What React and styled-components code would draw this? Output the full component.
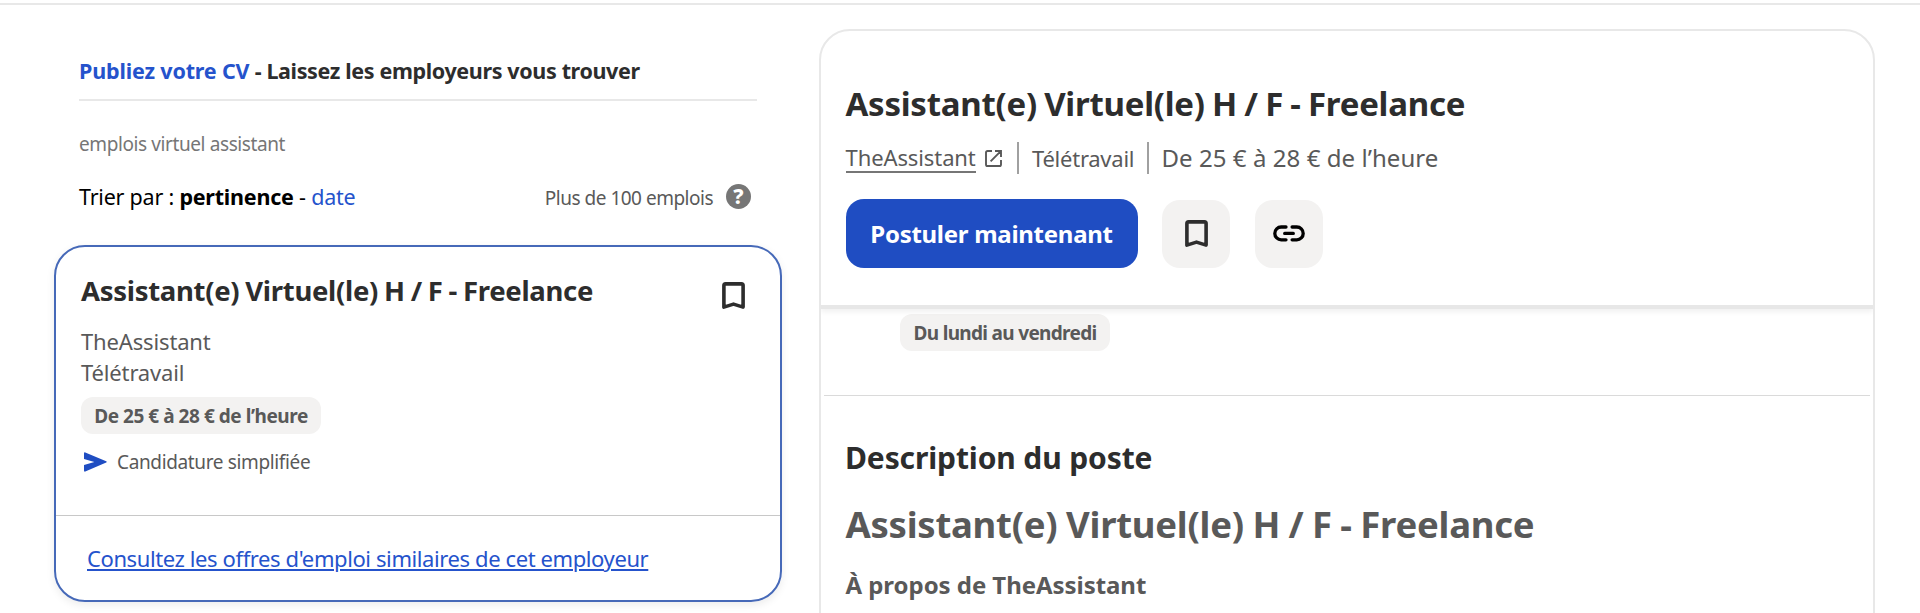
/* eslint-disable react/prop-types */
import React from "react"
import styled, { createGlobalStyle, css, ThemeProvider } from "styled-components"

const theme = {
  primary: "#1f4dc2",
  link: "#2553cc",
  cardBorder: "#4669b8",
  background: "#ffffff",
  surface: "#f3f2f1",
  divider: "#e8e8e8",
  textPrimary: "#2d2d2d",
  textSecondary: "#595959",
  textTertiary: "#767676",
}

const GlobalStyle = createGlobalStyle`
  * {
    box-sizing: border-box;
  }
  body {
    margin: 0;
    background-color: #ffffff;
    font-family: "Noto Sans", sans-serif;
    overflow: hidden;
  }
  h1, h2, h3, p {
    margin: 0;
  }
`

const Page = styled.div`
  height: 613px;
  padding-top: 3px;
  overflow: hidden;
  background-color: ${(props) => props.theme.background};
`

const Main = styled.main`
  display: flex;
  align-items: flex-start;
  gap: 37px;
  padding-left: 54px;
  border-top: 2px solid ${(props) => props.theme.divider};
`

const TextLink = styled.a`
  color: ${(props) => props.theme.link};
  text-decoration: none;
`

// Results column
// =============================================================================
const Results = styled.section`
  width: 728px;
  padding-top: 51px;
`

const ResultsHeader = styled.header`
  margin: 0 25px;
`

const PostResume = styled.p`
  padding-bottom: 13px;
  border-bottom: 2px solid ${(props) => props.theme.divider};
  color: ${(props) => props.theme.textPrimary};
  font-size: 21.5px;
  font-weight: 700;
  line-height: 30px;
  letter-spacing: -0.36px;
  white-space: nowrap;

  ${TextLink} {
    letter-spacing: -0.16px;
  }
`

const SearchTerms = styled.p`
  margin-top: 29px;
  color: ${(props) => props.theme.textTertiary};
  font-size: 19px;
  line-height: 28px;
  letter-spacing: -0.4px;
`

const SortRow = styled.div`
  display: flex;
  align-items: center;
  height: 30px;
  margin-top: 24px;
  padding-right: 6px;
`

const SortBy = styled.span`
  flex: 1;
  color: #000000;
  font-size: 21.5px;
  line-height: 30px;
  letter-spacing: -0.22px;
`

const JobCount = styled.span`
  padding-top: 1px;
  color: ${(props) => props.theme.textSecondary};
  font-size: 19px;
  line-height: 30px;
  letter-spacing: -0.5px;
`

const HelpBadge = styled.span`
  width: 25px;
  height: 25px;
  margin: 0 0 1px 13px;
  border-radius: 50%;
  background-color: ${(props) => props.theme.textTertiary};
  color: #ffffff;
  font-size: 21px;
  font-weight: 800;
  line-height: 25px;
  text-align: center;
`

const Card = styled.article`
  margin-top: 33px;
  border: 2px solid ${(props) => props.theme.cardBorder};
  border-radius: 31px;
  box-shadow: 0 3px 8px rgba(0, 0, 0, 0.08);
`

const CardBody = styled.div`
  padding: 26px 35px 39px 25px;
`

const CardTop = styled.div`
  display: flex;
  justify-content: space-between;
`

const CardTitle = styled.h2`
  color: ${(props) => props.theme.textPrimary};
  font-size: 27.5px;
  line-height: 36px;
  letter-spacing: -0.3px;
  word-spacing: -0.9px;
`

const CardBookmark = styled.span`
  display: flex;
  padding-top: 9px;
`

const CardDetails = styled.div`
  margin: 17px 0 9px;
  color: ${(props) => props.theme.textSecondary};
  font-size: 22px;
  line-height: 31px;
  letter-spacing: -0.15px;
`

const Pill = styled.span`
  display: flex;
  align-items: center;
  justify-content: center;
  width: ${(props) => props.$width};
  height: 37px;
  border-radius: 12px;
  background-color: ${(props) => props.theme.surface};
  color: ${(props) => props.theme.textSecondary};
  font-size: 19px;
  font-weight: 700;
  letter-spacing: ${(props) => props.$tracking};
  white-space: nowrap;
`

const EasyApply = styled.div`
  display: flex;
  align-items: center;
  gap: 10px;
  margin-top: 14px;
  padding-left: 3px;
  color: ${(props) => props.theme.textSecondary};
  font-size: 19px;
  line-height: 28px;
  letter-spacing: -0.36px;
`

const CardFooter = styled.footer`
  padding: 27px 31px;
  border-top: 1px solid #c8c8c8;
  font-size: 22px;
  line-height: 30px;
  letter-spacing: -0.4px;
  white-space: nowrap;

  ${TextLink} {
    text-decoration: underline;
    text-decoration-thickness: 2px;
    text-underline-offset: 2px;
  }
`

// Job panel
// =============================================================================
const Panel = styled.section`
  width: 1056px;
  height: 640px;
  margin-top: 24px;
  border: 2px solid ${(props) => props.theme.divider};
  border-radius: 31px 31px 0 0;
`

const PanelHeader = styled.header`
  padding: 51px 25px 37px 24.5px;
  border-bottom: 4px solid #e7e7e7;
  box-shadow: 0 3px 5px rgba(0, 0, 0, 0.06);
  clip-path: inset(0 0 -10px 0);
`

const PanelTitle = styled.h1`
  color: ${(props) => props.theme.textPrimary};
  font-size: 33px;
  line-height: 44px;
  letter-spacing: -0.25px;
  word-spacing: -1px;
`

const MetaRow = styled.div`
  display: flex;
  align-items: center;
  height: 32px;
  margin-top: 16px;
  color: ${(props) => props.theme.textSecondary};
  white-space: nowrap;
`

const Company = styled.a`
  width: 130px;
  margin-right: 9px;
  border-bottom: 2px solid #767676;
  font-size: 22px;
  line-height: 28px;
  letter-spacing: -0.1px;
`

const Location = styled.span`
  width: 100px;
  font-size: 22px;
  line-height: 32px;
  letter-spacing: -0.25px;
`

const Salary = styled.span`
  font-size: 24px;
  line-height: 32px;
  letter-spacing: 0.06px;
`

const Separator = styled.span`
  width: 2px;
  height: 32px;
  margin: 0 ${(props) => props.$after} 0 ${(props) => props.$before};
  background-color: #a0a0a0;
`

const Actions = styled.div`
  display: flex;
  align-items: center;
  margin-top: 25px;
`

const buttonBase = css`
  display: flex;
  align-items: center;
  justify-content: center;
  padding: 0;
  border: 0;
  border-radius: 18px;
  cursor: pointer;
`

const ApplyButton = styled.button`
  ${buttonBase}
  width: 292px;
  height: 69px;
  background-color: ${(props) => props.theme.primary};
  color: #ffffff;
  font-family: inherit;
  font-size: 24px;
  font-weight: 700;
  letter-spacing: -0.28px;
`

const IconButton = styled.button`
  ${buttonBase}
  width: 68px;
  height: 68px;
  margin-left: ${(props) => props.$gap};
  background-color: ${(props) => props.theme.surface};
`

const Schedule = styled.div`
  padding: 5px 79px 44px;
`

const Rule = styled.hr`
  height: 1px;
  margin: 0 3px;
  border: 0;
  background-color: #dadada;
`

const Description = styled.div`
  padding: 42px 25px 0 24.5px;
  color: ${(props) => props.theme.textSecondary};
`

const SectionTitle = styled.h2`
  color: ${(props) => props.theme.textPrimary};
  font-size: 30px;
  line-height: 40px;
  letter-spacing: -0.12px;
  text-indent: -0.5px;
`

const DescriptionTitle = styled.h1`
  margin-top: 21px;
  font-size: 36.5px;
  line-height: 50px;
  letter-spacing: -0.25px;
  word-spacing: -0.7px;
`

const DescriptionSubtitle = styled.h3`
  margin-top: 20px;
  font-size: 24px;
  line-height: 32px;
  letter-spacing: -0.05px;
`

// Icons
// =============================================================================
const BookmarkIcon = () => (
  <svg width="23" height="27" viewBox="0 0 23 27" fill="none">
    <path
      d="M1.9 3.6Q1.9 1.9 3.6 1.9H19.4Q21.1 1.9 21.1 3.6V25.1L11.5 22.1L1.9 25.1Z"
      stroke="#2d2d2d"
      strokeWidth="3.6"
      strokeLinejoin="round"
    />
  </svg>
)

const LinkIcon = () => (
  <svg width="32" height="17" viewBox="0 0 32 17" fill="none">
    <path
      d="M13 2H8.2a6.4 6.4 0 0 0 0 12.8H13M19.1 2h4.7a6.4 6.4 0 0 1 0 12.8h-4.7M11.7 8.4h8.6"
      stroke="#000000"
      strokeWidth="3.3"
      strokeLinecap="round"
    />
  </svg>
)

const SendIcon = () => (
  <svg width="23" height="20" viewBox="0 0 23 20">
    <path
      d="M0 1.4Q0 0 1.3.4L22.2 9.3Q23.2 9.9 22.2 10.5L1.3 19.6Q0 20 0 18.6V13.1L10.4 10L0 7Z"
      fill={theme.primary}
    />
  </svg>
)

const ExternalIcon = () => (
  <svg width="17" height="17" viewBox="0 0 17 17" fill="none">
    <path
      d="M7 1H2.6Q1 1 1 2.6V14.4Q1 16 2.6 16H14.4Q16 16 16 14.4V10M10 1H16V7M15.8 1.2L5.6 11.4"
      stroke="#595959"
      strokeWidth="1.9"
    />
  </svg>
)

function JobCard({ title, company, location, salary }) {
  return (
    <Card>
      <CardBody>
        <CardTop>
          <CardTitle>{title}</CardTitle>
          <CardBookmark>
            <BookmarkIcon />
          </CardBookmark>
        </CardTop>
        <CardDetails>
          <div>{company}</div>
          <div>{location}</div>
        </CardDetails>
        <Pill $width="240px" $tracking="-0.46px">
          {salary}
        </Pill>
        <EasyApply>
          <SendIcon />
          <span>Candidature simplifiée</span>
        </EasyApply>
      </CardBody>
      <CardFooter>
        <TextLink>
          Consultez les offres d'emploi similaires de cet employeur
        </TextLink>
      </CardFooter>
    </Card>
  )
}

function JobPanel({ title, company, location, salary }) {
  return (
    <Panel>
      <PanelHeader>
        <PanelTitle>{title}</PanelTitle>
        <MetaRow>
          <Company>{company}</Company>
          <ExternalIcon />
          <Separator $before="15px" $after="13.5px" />
          <Location>{location}</Location>
          <Separator $before="14.5px" $after="13px" />
          <Salary>{salary}</Salary>
        </MetaRow>
        <Actions>
          <ApplyButton type="button">Postuler maintenant</ApplyButton>
          <IconButton type="button" $gap="24.5px">
            <BookmarkIcon />
          </IconButton>
          <IconButton type="button" $gap="25px">
            <LinkIcon />
          </IconButton>
        </Actions>
      </PanelHeader>
      <Schedule>
        <Pill $width="210px" $tracking="-0.68px">
          Du lundi au vendredi
        </Pill>
      </Schedule>
      <Rule />
      <Description>
        <SectionTitle>Description du poste</SectionTitle>
        <DescriptionTitle>{title}</DescriptionTitle>
        <DescriptionSubtitle>À propos de {company}</DescriptionSubtitle>
      </Description>
    </Panel>
  )
}

const job = {
  title: "Assistant(e) Virtuel(le) H / F - Freelance",
  company: "TheAssistant",
  location: "Télétravail",
  salary: "De 25 € à 28 € de l’heure",
}

function App() {
  return (
    <ThemeProvider theme={theme}>
      <GlobalStyle />
      <Page>
        <Main>
          <Results>
            <ResultsHeader>
              <PostResume>
                <TextLink>Publiez votre CV</TextLink> - Laissez les employeurs
                vous trouver
              </PostResume>
              <SearchTerms>emplois virtuel assistant</SearchTerms>
              <SortRow>
                <SortBy>
                  Trier par : <b>pertinence</b> - <TextLink>date</TextLink>
                </SortBy>
                <JobCount>Plus de 100 emplois</JobCount>
                <HelpBadge>?</HelpBadge>
              </SortRow>
            </ResultsHeader>
            <JobCard {...job} />
          </Results>
          <JobPanel {...job} />
        </Main>
      </Page>
    </ThemeProvider>
  )
}

export default App
